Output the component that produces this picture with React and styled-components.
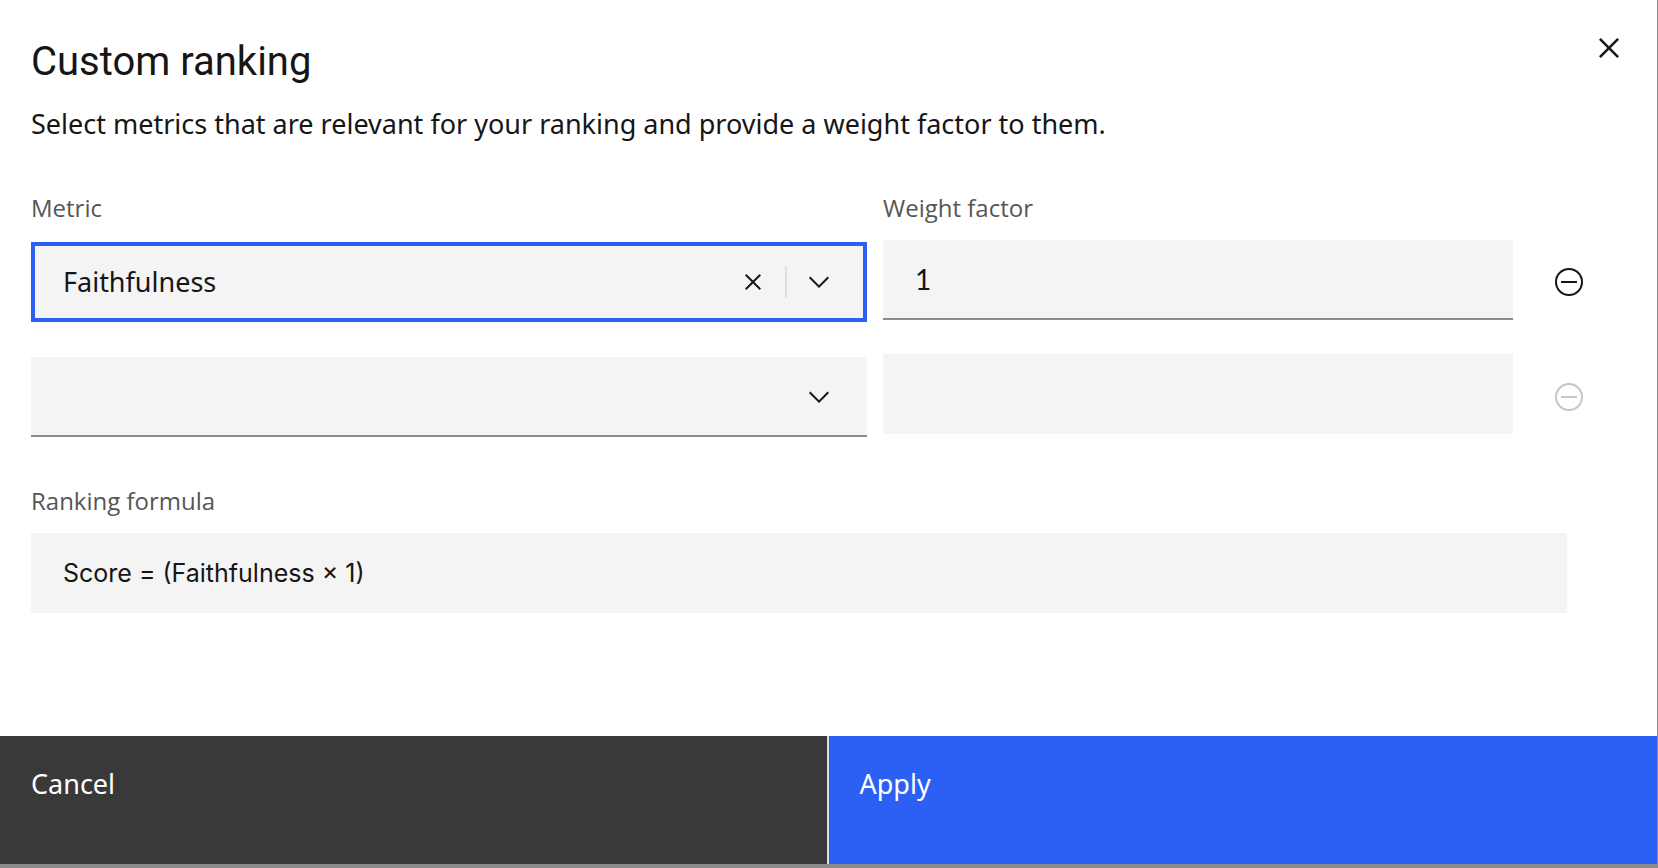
import React, { useState } from "react";
import styled, { createGlobalStyle } from "styled-components";

const color = {
  text: "#161616",
  label: "#565656",
  field: "#f4f4f4",
  rule: "#8c8c8c",
  subtle: "#e0e0e0",
  blue: "#2c60f5",
  dark: "#393939",
  disabled: "#c5c5c5",
  backdrop: "#8a8a8a",
};

const GlobalStyle = createGlobalStyle`
  *, *::before, *::after { box-sizing: border-box; }
  body {
    margin: 0;
    background: ${color.backdrop};
    color: ${color.text};
    font: 27px/40px "Noto Sans", "Open Sans", sans-serif;
  }
  button, input, select { font: inherit; color: inherit; }
  svg { display: block; }
`;

const Backdrop = styled.div`
  display: flex;
  min-height: 100vh;
  padding: 0 1px 4px 0;
`;

const Modal = styled.main`
  display: flex;
  flex-direction: column;
  flex: 1;
  min-width: 0;
  background: #fff;
`;

const Header = styled.header`
  display: flex;
  align-items: flex-start;
  justify-content: space-between;
`;

const Heading = styled.div`
  padding: 38px 0 0 31px;
`;

const Title = styled.h1`
  margin: 0 0 18px;
  font: 400 40px/48px Roboto, sans-serif;
`;

const Description = styled.p`
  margin: 0;
`;

const IconButton = styled.button`
  display: flex;
  align-items: center;
  justify-content: center;
  flex: none;
  width: ${(p) => p.$width}px;
  height: ${(p) => p.$height}px;
  padding: 0;
  border: 0;
  background: transparent;
  cursor: pointer;

  &:disabled {
    color: ${color.disabled};
    cursor: not-allowed;
  }
`;

const Body = styled.form`
  flex: 1;
  padding: 48px 48px 48px 31px;
`;

const Row = styled.div`
  display: grid;
  grid-template-columns: 836fr 630fr 80px;
  column-gap: 16px;
`;

const LabelRow = styled(Row)`
  margin-bottom: 16px;
`;

const FieldRow = styled(Row)`
  height: 82px;
  align-items: end;

  & + & {
    height: 83px;
    margin-top: 32px;
  }
`;

const labelText = `
  display: block;
  color: ${color.label};
  font: 24px/32px "Open Sans", sans-serif;
`;

const Label = styled.label`
  ${labelText}
`;

const SelectBox = styled.div`
  position: relative;
`;

const Select = styled.select`
  display: block;
  width: 100%;
  height: 80px;
  padding: 0 144px 0 32px;
  appearance: none;
  border: 0;
  border-bottom: 2px solid ${color.rule};
  border-radius: 0;
  background: ${color.field};
  outline: 0;

  ${(p) =>
    p.$active &&
    `
    padding: 0 140px 0 28px;
    border: 4px solid ${color.blue};
  `}
`;

const SelectTools = styled.div`
  position: absolute;
  top: 0;
  right: 32px;
  bottom: 0;
  display: flex;
  align-items: center;
  gap: 16px;
  pointer-events: none;

  button {
    pointer-events: auto;
  }
`;

const Divider = styled.span`
  width: 2px;
  height: 32px;
  background: ${color.subtle};
`;

const NumberField = styled.input`
  align-self: start;
  width: 100%;
  height: 80px;
  padding: 0 32px;
  border: 0;
  border-bottom: 2px solid ${color.rule};
  border-radius: 0;
  background: ${color.field};
  font: 28px/40px Lato, sans-serif;
  outline: 0;

  &:disabled {
    border-bottom-color: transparent;
  }
`;

const Formula = styled.section`
  margin: 48px 42px 0 0;
`;

const FormulaLabel = styled.h2`
  ${labelText}
  margin: 0 0 16px;
`;

const FormulaText = styled.output`
  display: flex;
  align-items: center;
  min-height: 80px;
  padding: 0 32px;
  background: ${color.field};
  font: 25px/32px Inter, sans-serif;
`;

const Footer = styled.footer`
  display: grid;
  grid-template-columns: 1fr 1fr;
`;

const ActionButton = styled.button`
  display: flex;
  align-items: flex-start;
  height: 128px;
  padding: 28px 31px;
  border: 0;
  background: ${(p) => (p.$primary ? color.blue : color.dark)};
  color: #fff;
  text-align: left;
  cursor: pointer;

  &:not(:last-child) {
    border-right: 2px solid ${color.subtle};
  }
`;

function ChevronIcon() {
  return (
    <svg width="32" height="32" viewBox="0 0 16 16" fill="currentColor" aria-hidden="true">
      <path d="M8 11L3 6 3.7 5.3 8 9.6 12.3 5.3 13 6z" />
    </svg>
  );
}

function ClearIcon() {
  return (
    <svg width="32" height="32" viewBox="0 0 16 16" fill="currentColor" aria-hidden="true">
      <path d="M12 4.7L11.3 4 8 7.3 4.7 4 4 4.7 7.3 8 4 11.3 4.7 12 8 8.7 11.3 12 12 11.3 8.7 8z" />
    </svg>
  );
}

function CloseIcon() {
  return (
    <svg width="40" height="40" viewBox="0 0 32 32" fill="currentColor" aria-hidden="true">
      <path d="M17.414 16L24 9.414 22.586 8 16 14.586 9.414 8 8 9.414 14.586 16 8 22.586 9.414 24 16 17.414 22.586 24 24 22.586z" />
    </svg>
  );
}

function MinusIcon() {
  return (
    <svg width="32" height="32" viewBox="0 0 32 32" fill="none" stroke="currentColor" strokeWidth="2" aria-hidden="true">
      <circle cx="16" cy="16" r="13" />
      <path d="M8 16h16" />
    </svg>
  );
}

function MetricRow({ index, metric, weight, active, onMetric, onWeight, onClear }) {
  return (
    <FieldRow>
      <SelectBox>
        <Select
          id={`metric-${index}`}
          aria-label="Metric"
          $active={active}
          value={metric}
          onChange={(e) => onMetric(e.target.value)}
        >
          <option value="" />
          <option>Faithfulness</option>
        </Select>
        <SelectTools>
          {metric && (
            <>
              <IconButton type="button" $width={32} $height={32} aria-label="Clear metric" onClick={onClear}>
                <ClearIcon />
              </IconButton>
              <Divider />
            </>
          )}
          <ChevronIcon />
        </SelectTools>
      </SelectBox>
      <NumberField
        id={`weight-${index}`}
        aria-label="Weight factor"
        inputMode="numeric"
        value={weight}
        disabled={!metric}
        onChange={(e) => onWeight(e.target.value)}
      />
      <IconButton type="button" $width={80} $height={80} aria-label="Remove metric" disabled={!metric} onClick={onClear}>
        <MinusIcon />
      </IconButton>
    </FieldRow>
  );
}

export default function App() {
  const [rows, setRows] = useState([
    { metric: "Faithfulness", weight: "1" },
    { metric: "", weight: "" },
  ]);
  const update = (index, change) =>
    setRows((all) => all.map((row, i) => (i === index ? { ...row, ...change } : row)));
  const terms = rows.filter((r) => r.metric).map((r) => `(${r.metric} × ${r.weight})`);

  return (
    <>
      <GlobalStyle />
      <Backdrop>
        <Modal role="dialog" aria-labelledby="dialog-title">
          <Header>
            <Heading>
              <Title id="dialog-title">Custom ranking</Title>
              <Description>
                Select metrics that are relevant for your ranking and provide a weight factor to them.
              </Description>
            </Heading>
            <IconButton type="button" $width={96} $height={96} aria-label="Close">
              <CloseIcon />
            </IconButton>
          </Header>
          <Body onSubmit={(e) => e.preventDefault()}>
            <LabelRow>
              <Label htmlFor="metric-0">Metric</Label>
              <Label htmlFor="weight-0">Weight factor</Label>
            </LabelRow>
            {rows.map((row, i) => (
              <MetricRow
                key={i}
                index={i}
                metric={row.metric}
                weight={row.weight}
                active={i === 0}
                onMetric={(metric) => update(i, { metric, weight: row.weight || "1" })}
                onWeight={(weight) => update(i, { weight })}
                onClear={() => update(i, { metric: "", weight: "" })}
              />
            ))}
            <Formula>
              <FormulaLabel>Ranking formula</FormulaLabel>
              <FormulaText>Score = {terms.join(" + ")}</FormulaText>
            </Formula>
          </Body>
          <Footer>
            <ActionButton type="button">Cancel</ActionButton>
            <ActionButton type="button" $primary>
              Apply
            </ActionButton>
          </Footer>
        </Modal>
      </Backdrop>
    </>
  );
}
